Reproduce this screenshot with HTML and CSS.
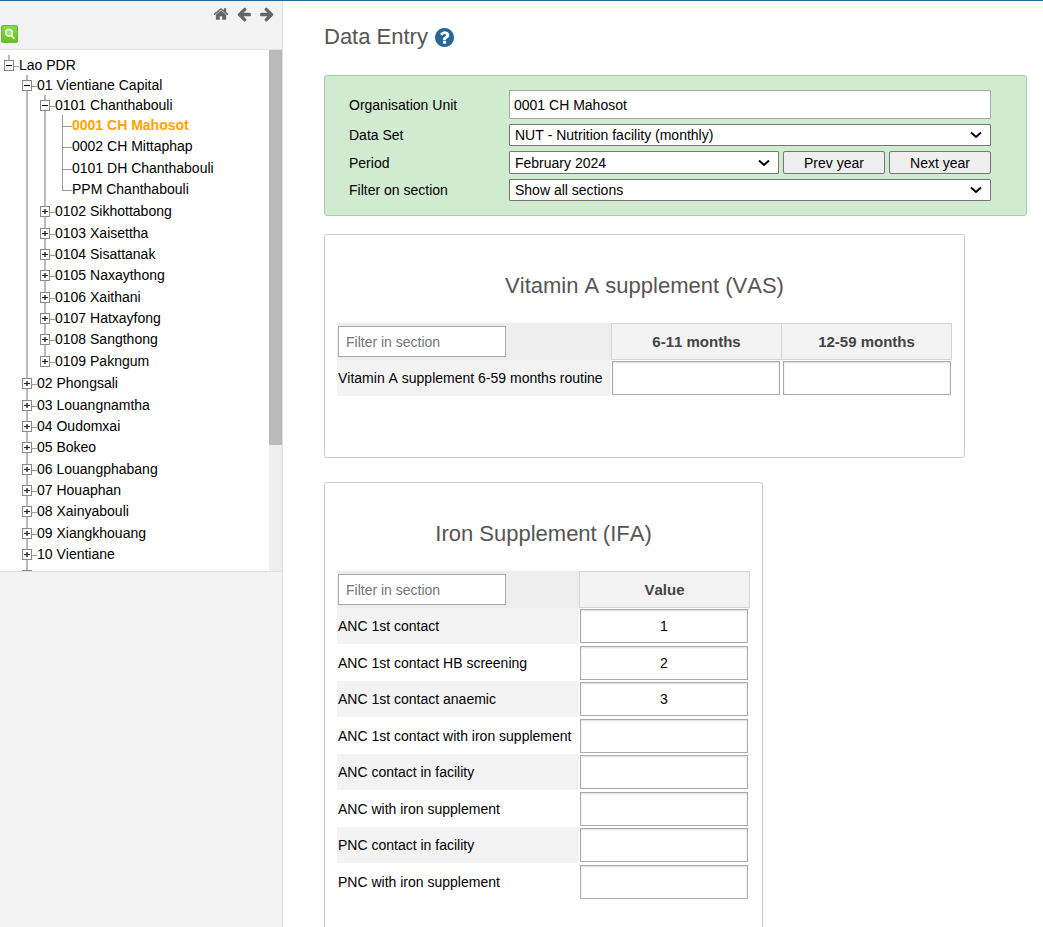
FILE: index.html
```html
<!DOCTYPE html>
<html lang="en">
<head>
<meta charset="utf-8">
<title>Data Entry</title>
<link rel="stylesheet" href="styles.css">
</head>
<body>
<div class="page">
  <aside class="sidebar">
    <div class="toolbar">
      <nav class="toolbar-nav">
        <a href="#home" aria-label="Home"><svg class="nav-icon" viewBox="0 0 1792 1792"><path d="M1472 992v480q0 26-19 45t-45 19h-384v-384h-256v384h-384q-26 0-45-19t-19-45v-480q0-1 .5-3t.5-3l575-474 575 474q1 2 1 6zm223-69l-62 74q-8 9-21 11h-3q-13 0-21-7l-692-577-692 577q-12 8-24 7-13-2-21-11l-62-74q-8-10-7-23.5t11-21.5l719-599q32-26 76-26t76 26l244 204v-195q0-14 9-23t23-9h192q14 0 23 9t9 23v408l219 182q10 8 11 21.5t-7 23.5z"/></svg></a>
        <a href="#back" aria-label="Back"><svg class="nav-icon" viewBox="0 0 1792 1792"><path d="M1664 896v128q0 53-32.5 90.5t-84.5 37.5h-704l293 294q38 36 38 90t-38 90l-75 76q-37 37-90 37-52 0-91-37l-651-652q-37-37-37-90 0-52 37-91l651-650q38-38 91-38 52 0 90 38l75 74q38 38 38 91t-38 91l-293 293h704q52 0 84.5 37.5t32.5 90.5z"/></svg></a>
        <a href="#forward" aria-label="Forward"><svg class="nav-icon" viewBox="0 0 1792 1792"><path d="M1600 960q0 54-37 91l-651 651q-39 37-91 37-51 0-90-37l-75-75q-38-38-38-91t38-91l293-293h-704q-52 0-84.5-37.5t-32.5-90.5v-128q0-53 32.5-90.5t84.5-37.5h704l-293-294q-38-36-38-90t38-90l75-75q38-38 90-38 53 0 91 38l651 651q37 35 37 90z"/></svg></a>
      </nav>
      <button class="search-button" type="button" aria-label="Search organisation units">
        <svg class="search-icon" viewBox="0 0 18 18">
          <defs><linearGradient id="green" x1="0" y1="0" x2="0" y2="1"><stop offset="0" stop-color="#8fd84a"/><stop offset="1" stop-color="#62c408"/></linearGradient></defs>
          <rect x="0.5" y="0.5" width="16" height="17" rx="1.5" fill="url(#green)" stroke="#6fb544"/>
          <circle cx="8" cy="7.8" r="3.3" fill="#9fe069" stroke="#eefbe2" stroke-width="1.6"/>
          <path d="M10.4 10.3l2.4 2.8" stroke="#eefbe2" stroke-width="2" stroke-linecap="round"/>
        </svg>
      </button>
    </div>
    <div class="tree-panel">
      <ul class="tree tree-root">
        <li><div class="node"><button class="toggle open" type="button" aria-label="Collapse"></button><a href="#lao">Lao PDR</a></div>
          <ul class="tree">
            <li><div class="node"><button class="toggle open" type="button" aria-label="Collapse"></button><a href="#01">01 Vientiane Capital</a></div>
              <ul class="tree">
                <li><div class="node"><button class="toggle open" type="button" aria-label="Collapse"></button><a href="#0101">0101 Chanthabouli</a></div>
                  <ul class="tree leaves">
                    <li><div class="node"><a class="selected" href="#0001">0001 CH Mahosot</a></div></li>
                    <li><div class="node"><a href="#0002">0002 CH Mittaphap</a></div></li>
                    <li><div class="node"><a href="#dh">0101 DH Chanthabouli</a></div></li>
                    <li><div class="node"><a href="#ppm">PPM Chanthabouli</a></div></li>
                  </ul>
                </li>
                <li><div class="node"><button class="toggle" type="button" aria-label="Expand"></button><a href="#0102">0102 Sikhottabong</a></div></li>
                <li><div class="node"><button class="toggle" type="button" aria-label="Expand"></button><a href="#0103">0103 Xaisettha</a></div></li>
                <li><div class="node"><button class="toggle" type="button" aria-label="Expand"></button><a href="#0104">0104 Sisattanak</a></div></li>
                <li><div class="node"><button class="toggle" type="button" aria-label="Expand"></button><a href="#0105">0105 Naxaythong</a></div></li>
                <li><div class="node"><button class="toggle" type="button" aria-label="Expand"></button><a href="#0106">0106 Xaithani</a></div></li>
                <li><div class="node"><button class="toggle" type="button" aria-label="Expand"></button><a href="#0107">0107 Hatxayfong</a></div></li>
                <li><div class="node"><button class="toggle" type="button" aria-label="Expand"></button><a href="#0108">0108 Sangthong</a></div></li>
                <li><div class="node"><button class="toggle" type="button" aria-label="Expand"></button><a href="#0109">0109 Pakngum</a></div></li>
              </ul>
            </li>
            <li><div class="node"><button class="toggle" type="button" aria-label="Expand"></button><a href="#02">02 Phongsali</a></div></li>
            <li><div class="node"><button class="toggle" type="button" aria-label="Expand"></button><a href="#03">03 Louangnamtha</a></div></li>
            <li><div class="node"><button class="toggle" type="button" aria-label="Expand"></button><a href="#04">04 Oudomxai</a></div></li>
            <li><div class="node"><button class="toggle" type="button" aria-label="Expand"></button><a href="#05">05 Bokeo</a></div></li>
            <li><div class="node"><button class="toggle" type="button" aria-label="Expand"></button><a href="#06">06 Louangphabang</a></div></li>
            <li><div class="node"><button class="toggle" type="button" aria-label="Expand"></button><a href="#07">07 Houaphan</a></div></li>
            <li><div class="node"><button class="toggle" type="button" aria-label="Expand"></button><a href="#08">08 Xainyabouli</a></div></li>
            <li><div class="node"><button class="toggle" type="button" aria-label="Expand"></button><a href="#09">09 Xiangkhouang</a></div></li>
            <li><div class="node"><button class="toggle" type="button" aria-label="Expand"></button><a href="#10">10 Vientiane</a></div></li>
            <li><div class="node"><button class="toggle" type="button" aria-label="Expand"></button></div></li>
          </ul>
        </li>
      </ul>
      <div class="scroll-track"><div class="scroll-thumb"></div></div>
    </div>
  </aside>

  <main class="main">
    <h1 class="title">Data Entry
      <a class="help" href="#help" aria-label="Help"><svg class="help-icon" viewBox="128 128 1536 1536"><path d="M1024 1376v-192q0-14-9-23t-23-9h-192q-14 0-23 9t-9 23v192q0 14 9 23t23 9h192q14 0 23-9t9-23zm256-672q0-88-55.5-163t-138.5-116-170-41q-243 0-371 213-15 24 8 42l132 100q7 6 19 6 16 0 25-12 53-68 86-92 34-24 86-24 48 0 85.5 26t37.5 59q0 38-20 61t-68 45q-63 28-115.5 86.5t-52.5 125.5v36q0 14 9 23t23 9h192q14 0 23-9t9-23q0-19 21.5-49.5t54.5-49.5q32-18 49-28.5t46-35 44.5-48 28-60.5 12.5-81zm384 192q0 209-103 385.5t-279.5 279.5-385.5 103-385.5-103-279.5-279.5-103-385.5 103-385.5 279.5-279.5 385.5-103 385.5 103 279.5 279.5 103 385.5z"/></svg></a>
    </h1>

    <form class="selection">
      <label for="unit">Organisation Unit</label>
      <input class="unit" id="unit" type="text" value="0001 CH Mahosot" readonly>
      <label for="dataset">Data Set</label>
      <select class="select" id="dataset"><option>NUT - Nutrition facility (monthly)</option></select>
      <label for="period">Period</label>
      <div class="period-row">
        <select class="select" id="period"><option>February 2024</option></select>
        <button class="year-button" type="button">Prev year</button>
        <button class="year-button" type="button">Next year</button>
      </div>
      <label for="section">Filter on section</label>
      <select class="select" id="section"><option>Show all sections</option></select>
    </form>

    <section class="card">
      <h2 class="card-title">Vitamin A supplement (VAS)</h2>
      <table class="entry">
        <thead>
          <tr>
            <td class="filter-cell wide"><input class="filter" type="text" placeholder="Filter in section" aria-label="Filter in section"></td>
            <th scope="col">6-11 months</th>
            <th scope="col">12-59 months</th>
          </tr>
        </thead>
        <tbody>
          <tr><td class="name">Vitamin A supplement 6-59 months routine</td><td class="cell"><input class="value" type="text" aria-label="6-11 months"></td><td class="cell"><input class="value" type="text" aria-label="12-59 months"></td></tr>
        </tbody>
      </table>
    </section>

    <section class="card">
      <h2 class="card-title">Iron Supplement (IFA)</h2>
      <table class="entry">
        <thead>
          <tr>
            <td class="filter-cell"><input class="filter" type="text" placeholder="Filter in section" aria-label="Filter in section"></td>
            <th scope="col">Value</th>
          </tr>
        </thead>
        <tbody>
          <tr><td class="name"><label for="v1">ANC 1st contact</label></td><td class="cell"><input class="value" id="v1" type="text" value="1"></td></tr>
          <tr><td class="name"><label for="v2">ANC 1st contact HB screening</label></td><td class="cell"><input class="value" id="v2" type="text" value="2"></td></tr>
          <tr><td class="name"><label for="v3">ANC 1st contact anaemic</label></td><td class="cell"><input class="value" id="v3" type="text" value="3"></td></tr>
          <tr><td class="name"><label for="v4">ANC 1st contact with iron supplement</label></td><td class="cell"><input class="value" id="v4" type="text"></td></tr>
          <tr><td class="name"><label for="v5">ANC contact in facility</label></td><td class="cell"><input class="value" id="v5" type="text"></td></tr>
          <tr><td class="name"><label for="v6">ANC with iron supplement</label></td><td class="cell"><input class="value" id="v6" type="text"></td></tr>
          <tr><td class="name"><label for="v7">PNC contact in facility</label></td><td class="cell"><input class="value" id="v7" type="text"></td></tr>
          <tr><td class="name"><label for="v8">PNC with iron supplement</label></td><td class="cell"><input class="value" id="v8" type="text"></td></tr>
        </tbody>
      </table>
    </section>
  </main>
</div>
</body>
</html>
```
FILE: styles.css
```css
* { box-sizing: border-box; }

body {
  margin: 0;
  background: #fff;
  color: #000;
  font: 14px/20px "Liberation Sans", Arial, sans-serif;
  font-kerning: none;
}

a { color: inherit; text-decoration: none; }

input, select, button { font: inherit; font-kerning: none; color: inherit; }

.page {
  display: flex;
  height: 100vh;
  border-top: 1px solid #276696;
}

/* Sidebar */
.sidebar {
  flex: 0 0 283px;
  background: #f3f3f3;
  border-right: 1px solid #e0e0e0;
}

.toolbar { padding: 5px 7px 6px 0; }

.toolbar-nav {
  display: flex;
  justify-content: flex-end;
  gap: 7px;
}

.toolbar-nav a { display: flex; }

.nav-icon {
  width: 16px;
  height: 16px;
  fill: #666;
}

.search-button {
  display: block;
  width: 18px;
  height: 18px;
  margin: 3px 0 0 1px;
  padding: 0;
  border: 0;
  background: none;
}

.search-icon { display: block; width: 18px; height: 18px; }

.tree-panel {
  display: flex;
  justify-content: space-between;
  height: 523px;
  border-top: 1px solid #e0e0e0;
  border-bottom: 1px solid #e0e0e0;
  background: #fff;
  overflow: hidden;
}

.scroll-track { width: 13px; background: #eee; }
.scroll-thumb { height: 395px; background: #bababa; }

.tree {
  margin: 0;
  padding: 0 0 0 18px;
  list-style: none;
}

.tree-root { padding: 5px 0 0 4px; }

.tree li { position: relative; padding-bottom: 1px; }
.tree li:nth-child(3n+2) { padding-bottom: 2px; }

/* Vertical guide beside each entry */
.tree li::before {
  content: "";
  position: absolute;
  top: 0;
  bottom: 0;
  left: 4px;
  width: 2px;
  background: #bbb;
}

.tree li:last-child::before { bottom: auto; height: 12px; }
.tree-root > li:last-child::before { height: 5px; }
.leaves > li::before { width: 1px; background: #999; }

.node {
  display: flex;
  align-items: center;
  height: 20px;
  white-space: nowrap;
}

/* Horizontal connector before each label */
.node a::before {
  content: "";
  display: inline-block;
  width: 5px;
  height: 1px;
  background: #999;
  vertical-align: 3px;
}

.leaves .node { padding-left: 5px; }
.leaves .node a::before { width: 9px; }

.toggle {
  position: relative;
  width: 10px;
  height: 11px;
  padding: 0;
  border: 1px solid #888;
  background:
    linear-gradient(#222, #222) center / 6px 1px no-repeat,
    linear-gradient(#666, #666) center / 2px 5px no-repeat,
    #fff;
}

.toggle.open {
  background: linear-gradient(#000, #000) center / 6px 1px no-repeat, #fff;
}

.selected { color: #ffa500; font-weight: bold; }

/* Main column */
.main {
  flex: 1;
  min-width: 0;
  padding: 23px 16px 24px 41px;
  overflow-y: auto;
  scrollbar-width: none;
}

.title {
  display: flex;
  align-items: center;
  gap: 7px;
  margin: 0 0 25px;
  color: #555;
  font-size: 22px;
  font-weight: normal;
  line-height: 26px;
}

.help { display: flex; }
.help-icon { width: 19px; height: 19px; fill: #276696; }

.selection {
  display: grid;
  grid-template-columns: 160px 1fr;
  grid-template-rows: 29px 22px 23px 22px;
  row-gap: 5px;
  align-items: center;
  margin-bottom: 18px;
  padding: 14px 35px 14px 24px;
  border: 1px solid #a1d0a1;
  border-radius: 3px;
  background: #d0ebd0;
}

.unit {
  width: 100%;
  height: 100%;
  padding: 0 4px;
  border: 1px solid #aaa;
  background: #fff;
}

.select {
  width: 100%;
  height: 100%;
  padding: 0 24px 0 5px;
  border: 1px solid #767676;
  border-radius: 1px;
  appearance: none;
  background: #fff url("data:image/svg+xml,%3Csvg xmlns='http://www.w3.org/2000/svg' width='12' height='8'%3E%3Cpath d='M1 1.5l5 4.5 5-4.5' fill='none' stroke='%23000' stroke-width='2'/%3E%3C/svg%3E") right 8px center no-repeat;
}

.period-row { display: flex; gap: 4px; height: 100%; }
.period-row .select { flex: 1; }

.year-button {
  flex: 0 0 102px;
  padding: 0;
  border: 1px solid #767676;
  border-radius: 2px;
  background: #efefef;
}

.card {
  width: fit-content;
  margin-bottom: 24px;
  padding: 38px 12px 61px;
  border: 1px solid #ccc;
  border-radius: 3px;
}

.card-title {
  margin: 0 0 24px;
  color: #555;
  font-size: 22px;
  font-weight: normal;
  line-height: 26px;
  text-align: center;
}

.entry { border-spacing: 0; }
.entry td, .entry th { height: 37px; padding: 0; }

.entry th {
  width: 171px;
  border: 1px solid #d6d6d6;
  background: #f3f3f3;
  color: #444;
  font-size: 15px;
}

.entry th + th { width: 170px; border-left: 0; }

.entry .filter-cell { width: 242px; padding-left: 1px; background: #ededed; }
.entry .wide { width: 274px; }
.entry .name { padding-left: 1px; white-space: nowrap; }
.entry tbody tr:nth-child(odd) .name { background: #f3f3f3; }
.entry tbody tr:nth-child(odd) td { height: 36px; }
.entry .cell { padding-left: 1px; }

.filter {
  display: block;
  width: 168px;
  height: 31px;
  padding: 0 7px;
  border: 1px solid #aaa;
}

.filter::placeholder { color: #757575; }

.value {
  display: block;
  width: 168px;
  height: 34px;
  padding: 0 4px;
  border: 1px solid #aaa;
  box-shadow: inset 0 1px 2px #ddd;
  text-align: center;
}
```
